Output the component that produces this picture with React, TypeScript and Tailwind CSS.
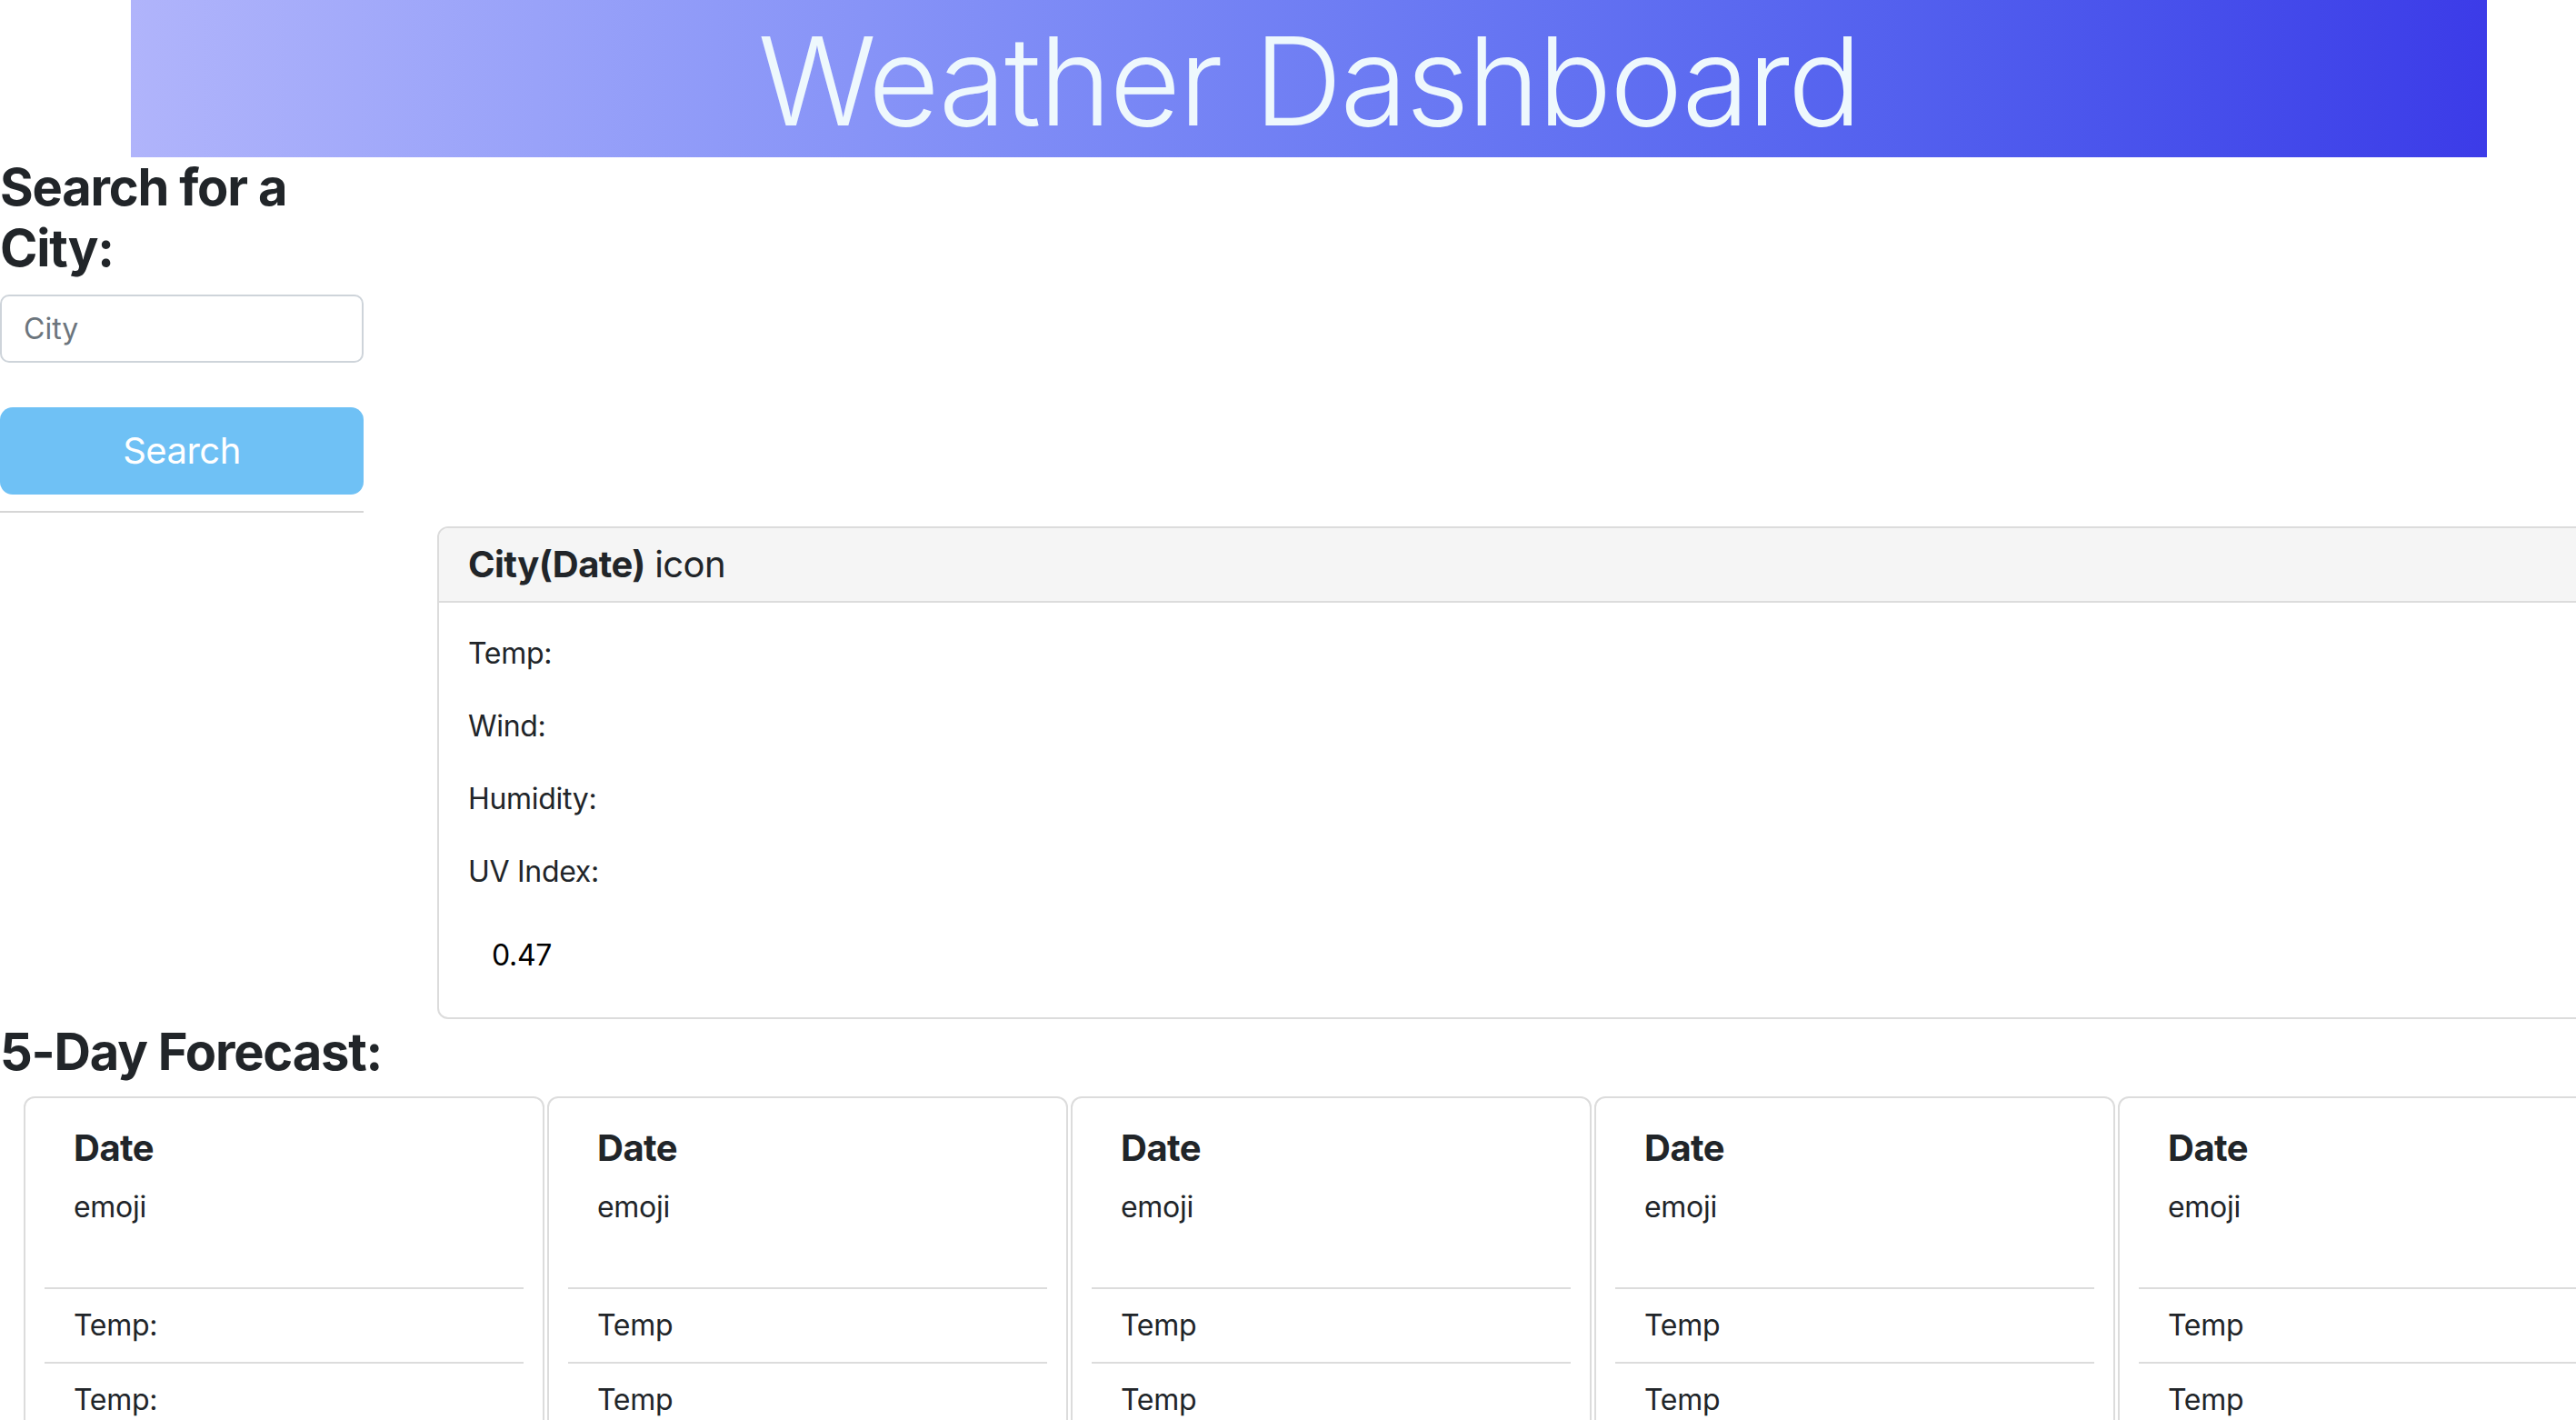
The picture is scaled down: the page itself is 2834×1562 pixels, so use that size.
const days = [
  { first: "Temp:", second: "Temp:" },
  { first: "Temp", second: "Temp" },
  { first: "Temp", second: "Temp" },
  { first: "Temp", second: "Temp" },
  { first: "Temp", second: "Temp" },
];

function ForecastCard({ first, second }: { first: string; second: string }) {
  return (
    <div className="w-[573px] shrink-0 rounded-[12px] border-2 border-[#dcdcdc] px-[21px] bg-white">
      <div className="px-[32px] pt-[31px] pb-[32px]">
        <h5 className="text-[40px] leading-[48px] font-bold tracking-[-0.5px] mb-[17px]">Date</h5>
        <p className="text-[32px] leading-[48px] tracking-[-0.3px] mb-[32px]">emoji</p>
      </div>
      <div className="border-t-2 border-[#dcdcdc] px-[32px] py-[16px] text-[32px] leading-[48px] tracking-[-0.3px]">{first}</div>
      <div className="border-t-2 border-[#dcdcdc] px-[32px] py-[16px] text-[32px] leading-[48px] tracking-[-0.3px]">{second}</div>
      <div className="border-t-2 border-[#dcdcdc] px-[32px] py-[16px] text-[32px] leading-[48px] tracking-[-0.3px]">Wind</div>
      <div className="border-t-2 border-[#dcdcdc] px-[32px] py-[16px] text-[32px] leading-[48px] tracking-[-0.3px]">Humidity</div>
    </div>
  );
}

export default function App() {
  return (
    <div className="h-screen w-screen overflow-hidden bg-white text-[#212529] font-['Inter',sans-serif]">
      <header className="ml-[144px] w-[2592px] h-[173px] bg-gradient-to-r from-[#b0b4fb] to-[#3c3be8] flex items-center justify-center">
        <h1 className="text-[135px] leading-none font-light text-[#eef8fd] tracking-[-2px] pt-[6px]">Weather Dashboard</h1>
      </header>

      <aside className="w-[400px]">
        <h3 className="text-[56px] leading-[67px] font-bold tracking-[-1.2px]">Search for a City:</h3>
        <input
          type="text"
          placeholder="City"
          className="mt-[17px] w-full h-[75px] rounded-[10px] border-2 border-[#ced4da] px-[24px] text-[32px] placeholder:text-[#6c757d] outline-none"
        />
        <button className="mt-[49px] w-full h-[96px] rounded-[14px] bg-[#6fc1f5] text-white text-[40px] tracking-[-0.5px]">Search</button>
        <hr className="mt-[18px] border-t-2 border-[#d6d6d6]" />
      </aside>

      <section className="ml-[481px] mt-[15px] w-[2500px] rounded-[12px] border-2 border-[#dcdcdc]">
        <div className="bg-[#f5f5f5] border-b-2 border-[#dcdcdc] rounded-t-[10px] px-[32px] py-[16px]">
          <h5 className="text-[40px] leading-[48px] tracking-[-0.6px]">
            <span className="font-bold">City(Date)</span> icon
          </h5>
        </div>
        <div className="p-[32px] text-[32px] leading-[48px] tracking-[-0.3px]">
          <p className="mb-[32px]">Temp:</p>
          <p className="mb-[32px]">Wind:</p>
          <p className="mb-[32px]">Humidity:</p>
          <p className="mb-[32px]">UV Index:</p>
          <div className="px-[26px] py-[12px] text-black">0.47</div>
        </div>
      </section>

      <h3 className="pt-[3px] text-[56px] leading-[67px] font-bold tracking-[-1.2px] mb-[15px]">5-Day Forecast:</h3>
      <div className="flex gap-[3px] pl-[26px]">
        {days.map((d, i) => (
          <ForecastCard key={i} first={d.first} second={d.second} />
        ))}
      </div>
    </div>
  );
}
